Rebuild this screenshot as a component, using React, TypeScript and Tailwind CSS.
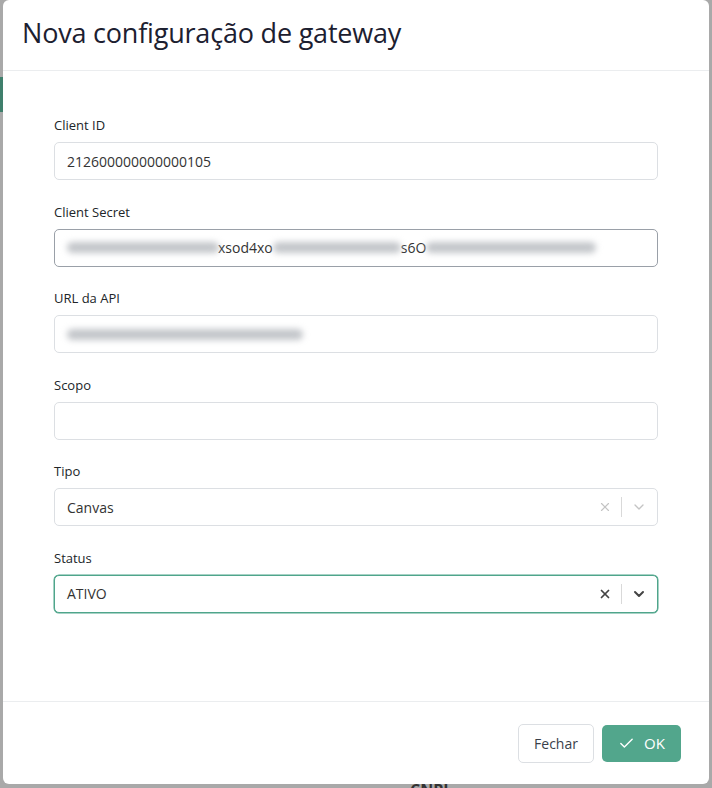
import { Check, ChevronDown, X } from "lucide-react";

const FONT = { fontFamily: '"Open Sans", "Noto Sans", sans-serif' };

function Label({ children }: { children: React.ReactNode }) {
  return <div className="mb-[7px] text-[13px] leading-5 font-medium text-[#212529]">{children}</div>;
}

function TextField({ label, children, dark }: { label: string; children?: React.ReactNode; dark?: boolean }) {
  return (
    <div className="mb-[21.5px]">
      <Label>{label}</Label>
      <div
        className={`flex h-[38px] items-center rounded-[5px] border bg-white px-3 text-[14px] text-[#333] ${
          dark ? "border-[#9aa0a8]" : "border-[#dcdfe3]"
        }`}
      >
        {children}
      </div>
    </div>
  );
}

// stand-in for the blurred-out secret text
function Blur({ w }: { w: number }) {
  return (
    <span
      className="inline-block h-[11px] rounded-full bg-[#c3c6ca] blur-[3px]"
      style={{ width: w }}
    />
  );
}

function SelectField({ label, value, focused }: { label: string; value: string; focused?: boolean }) {
  return (
    <div className="mb-[21.5px]">
      <Label>{label}</Label>
      <div
        className={`flex h-[38px] items-center rounded-[5px] border bg-white pl-3 pr-[10px] text-[14px] text-[#333] ${
          focused ? "border-[#4fa58b] shadow-[0_0_0_0.5px_#4fa58b]" : "border-[#dcdfe3]"
        }`}
      >
        <span className="flex-1">{value}</span>
        <X size={14} strokeWidth={focused ? 3 : 2} className={focused ? "text-[#444]" : "text-[#c4c4c4]"} />
        <span className="mx-[9px] h-[20px] w-px bg-[#d9d9d9]" />
        <ChevronDown size={16} strokeWidth={focused ? 3 : 2} className={focused ? "text-[#444]" : "text-[#c4c4c4]"} />
      </div>
    </div>
  );
}

export default function App() {
  return (
    <div className="relative h-[788px] w-[712px] overflow-hidden bg-[#a9a9a9]" style={FONT}>
      {/* bits of the page behind the overlay */}
      <div className="absolute left-0 top-[77px] h-[35px] w-[3px] bg-[#3f7f6c]" />
      <div className="absolute left-[410px] top-[780px] text-[16px] leading-5 font-bold text-[#333]">CNPJ</div>

      <div className="relative ml-[3px] flex h-[784px] w-[706px] flex-col rounded-[6px] bg-white">
        <div className="flex h-[71px] items-center border-b border-[#ebedef] px-[19px] pb-[4px]">
          <h1 className="text-[27px] tracking-[-0.2px] text-[#1c2030]">Nova configuração de gateway</h1>
        </div>

        <div className="flex-1 px-[51px] pt-[44px]">
          <TextField label="Client ID">212600000000000105</TextField>
          <TextField label="Client Secret" dark>
            <span className="flex items-center">
              <Blur w={152} />
              <span className="-ml-[1px]">xsod4xo</span>
              <Blur w={128} />
              <span>s6O</span>
              <Blur w={170} />
            </span>
          </TextField>
          <TextField label="URL da API">
            <Blur w={236} />
          </TextField>
          <TextField label="Scopo" />
          <SelectField label="Tipo" value="Canvas" />
          <SelectField label="Status" value="ATIVO" focused />
        </div>

        <div className="flex h-[83px] items-center justify-end gap-2 border-t border-[#ebedef] pr-[28px]">
          <button className="h-[39px] w-[76px] rounded-[5px] border border-[#dcdfe3] bg-white text-[14px] text-[#3a3f4a]">
            Fechar
          </button>
          <button className="flex h-[37px] w-[79px] items-center justify-center gap-[9px] rounded-[5px] bg-[#52a68c] text-[15px] text-white">
            <Check size={17} strokeWidth={2} />
            OK
          </button>
        </div>
      </div>
    </div>
  );
}
